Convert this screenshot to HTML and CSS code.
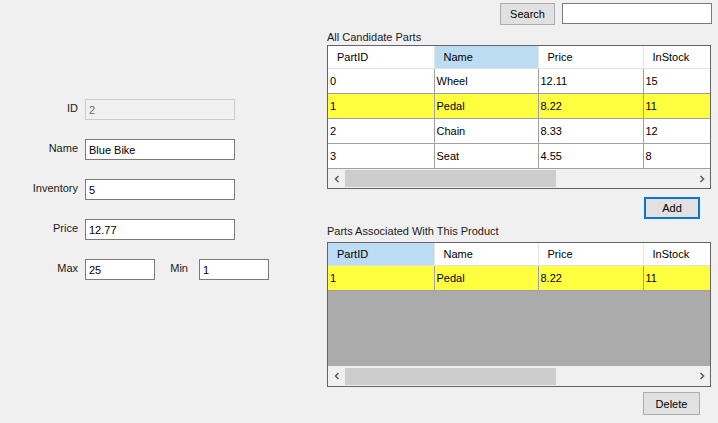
FILE: index.html
```html
<!DOCTYPE html>
<html>
<head>
<meta charset="utf-8">
<link rel="stylesheet" href="styles.css">
</head>
<body>
<div class="window">
  <div class="left">
    <div class="form">
      <label class="lbl">ID</label>
      <div class="field"><input class="box box-wide box-disabled" value="2" disabled></div>
      <label class="lbl">Name</label>
      <div class="field"><input class="box box-wide" value="Blue Bike"></div>
      <label class="lbl">Inventory</label>
      <div class="field"><input class="box box-wide" value="5"></div>
      <label class="lbl">Price</label>
      <div class="field"><input class="box box-wide" value="12.77"></div>
      <label class="lbl">Max</label>
      <div class="field minmax">
        <input class="box box-short" value="25">
        <label class="lbl-min">Min</label>
        <input class="box box-short" value="1">
      </div>
    </div>
  </div>
  <div class="right">
    <div class="search-row">
      <button class="btn btn-search">Search</button>
      <input class="box box-search" value="">
    </div>
    <div class="caption">All Candidate Parts</div>
    <div class="grid">
      <table class="tbl">
        <colgroup><col class="c1"><col class="c2"><col class="c3"><col class="c4"></colgroup>
        <thead>
          <tr><th>PartID</th><th class="sel">Name</th><th>Price</th><th>InStock</th></tr>
        </thead>
        <tbody>
          <tr><td>0</td><td>Wheel</td><td>12.11</td><td>15</td></tr>
          <tr class="hl"><td>1</td><td>Pedal</td><td>8.22</td><td>11</td></tr>
          <tr><td>2</td><td>Chain</td><td>8.33</td><td>12</td></tr>
          <tr><td>3</td><td>Seat</td><td>4.55</td><td>8</td></tr>
        </tbody>
      </table>
      <div class="hscroll">
        <span class="arrow"><svg width="8" height="8" viewBox="0 0 8 8"><polyline points="5.5,1 2.5,4 5.5,7" fill="none" stroke="#606060" stroke-width="1.6"/></svg></span>
        <div class="track"><div class="thumb"></div></div>
        <span class="arrow"><svg width="8" height="8" viewBox="0 0 8 8"><polyline points="2.5,1 5.5,4 2.5,7" fill="none" stroke="#606060" stroke-width="1.6"/></svg></span>
      </div>
    </div>
    <div class="btn-row"><button class="btn btn-focus">Add</button></div>
    <div class="caption caption-2">Parts Associated With This Product</div>
    <div class="grid grid-2">
      <table class="tbl">
        <colgroup><col class="c1"><col class="c2"><col class="c3"><col class="c4"></colgroup>
        <thead>
          <tr><th class="sel">PartID</th><th>Name</th><th>Price</th><th>InStock</th></tr>
        </thead>
        <tbody>
          <tr class="hl"><td>1</td><td>Pedal</td><td>8.22</td><td>11</td></tr>
        </tbody>
      </table>
      <div class="workspace"></div>
      <div class="hscroll">
        <span class="arrow"><svg width="8" height="8" viewBox="0 0 8 8"><polyline points="5.5,1 2.5,4 5.5,7" fill="none" stroke="#606060" stroke-width="1.6"/></svg></span>
        <div class="track"><div class="thumb"></div></div>
        <span class="arrow"><svg width="8" height="8" viewBox="0 0 8 8"><polyline points="2.5,1 5.5,4 2.5,7" fill="none" stroke="#606060" stroke-width="1.6"/></svg></span>
      </div>
    </div>
    <div class="btn-row"><button class="btn btn-delete">Delete</button></div>
  </div>
</div>
</body>
</html>
```

FILE: styles.css
```css
* { box-sizing: border-box; }
html, body {
  margin: 0;
  padding: 0;
  background: #f0f0f0;
  width: 718px;
  height: 423px;
  overflow: hidden;
}
body {
  font-family: "Liberation Sans", Arial, sans-serif;
  font-size: 11px;
  color: #000;
}
.window {
  display: flex;
  height: 423px;
}
.left {
  width: 327px;
  padding-top: 99px;
}
.form {
  display: grid;
  grid-template-columns: 78px auto;
  grid-auto-rows: 21px;
  column-gap: 7px;
  row-gap: 19px;
}
.lbl {
  text-align: right;
  line-height: 18px;
  color: #1a1a1a;
}
.field {
  display: flex;
  align-items: flex-start;
}
.box {
  height: 21px;
  border: 1px solid #7a7a7a;
  background: #fff;
  font-family: "Liberation Sans", Arial, sans-serif;
  font-size: 11px;
  color: #000;
  padding: 0 3px;
  margin: 0;
  outline: none;
}
.box-wide { width: 150px; }
.box-short { width: 70px; }
.box-disabled {
  background: #f0f0f0;
  border-color: #cccccc;
  color: #6d6d6d;
}
.lbl-min {
  width: 44px;
  text-align: right;
  padding-right: 11px;
  line-height: 18px;
  color: #1a1a1a;
}
.right {
  width: 385px;
  padding-top: 3px;
}
.search-row {
  display: flex;
  justify-content: flex-end;
  gap: 7px;
  height: 22px;
}
.btn {
  font-family: "Liberation Sans", Arial, sans-serif;
  font-size: 11px;
  color: #000;
  background: #e1e1e1;
  border: 1px solid #adadad;
  padding: 0;
  margin: 0;
  height: 23px;
}
.btn-search { width: 55px; height: 22px; }
.box-search { width: 150px; }
.caption {
  height: 20px;
  padding-top: 6px;
  line-height: 12px;
  color: #1a1a1a;
}
.grid {
  width: 384px;
  height: 144px;
  border: 1px solid #646464;
  background: #fff;
  display: flex;
  flex-direction: column;
  overflow: hidden;
}
.tbl {
  border-collapse: collapse;
  table-layout: fixed;
  width: 425px;
}
.c1 { width: 106px; }
.c2 { width: 104px; }
.c3 { width: 105px; }
.c4 { width: 110px; }
.tbl th {
  height: 22px;
  font-weight: normal;
  text-align: left;
  padding: 0 0 0 9px;
  border-right: 1px solid #e5e5e5;
  border-bottom: 1px solid #e0e0e0;
  background: #fff;
  white-space: nowrap;
}
.tbl th.sel { background: #bcdcf4; }
.tbl td {
  height: 25px;
  padding: 0 0 0 2px;
  border-right: 1px solid #a0a0a0;
  border-bottom: 1px solid #a0a0a0;
  white-space: nowrap;
}
.tbl tr.hl td { background: #ffff40; }
.hscroll {
  height: 20px;
  display: flex;
  align-items: center;
  background: #f0f0f0;
  margin-top: auto;
}
.arrow {
  width: 17px;
  height: 20px;
  display: flex;
  align-items: center;
  justify-content: center;
}
.track {
  flex: 1;
  height: 20px;
  display: flex;
  align-items: center;
}
.thumb {
  width: 211px;
  height: 17px;
  background: #cdcdcd;
}
.btn-row {
  display: flex;
  justify-content: flex-end;
  padding-right: 12px;
  padding-top: 8px;
  height: 31px;
}
.btn-focus {
  width: 56px;
  height: 22px;
  border: 2px solid #0078d7;
}
.caption-2 { height: 22px; padding-top: 5px; }
.grid-2 { height: 145px; }
.workspace {
  flex: 1;
  background: #ababab;
}
.btn-delete {
  width: 57px;
  height: 23px;
  margin-top: -3px;
}
.grid-2 + .btn-row { padding-top: 5px; }
.grid-2 + .btn-row .btn-delete { margin-top: 0; }
```
